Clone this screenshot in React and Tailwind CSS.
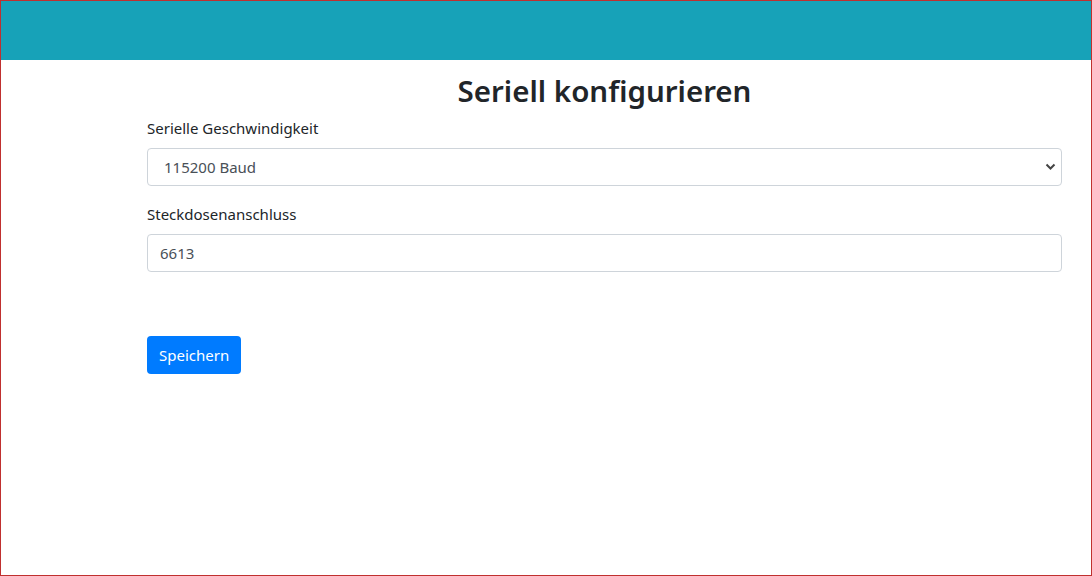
export default function App() {
  return (
    <div
      className="w-[1092px] h-[576px] border border-[#c0302f] bg-white flex flex-col overflow-hidden"
      style={{ fontFamily: '"Noto Sans", "Open Sans", sans-serif' }}
    >
      <div className="h-[59px] bg-[#17a2b8] shrink-0" />
      <div className="pl-[146px] pr-[29px] pt-[12px] flex flex-col">
        <h2 className="text-[29.5px] leading-[38px] font-semibold text-[#212529] text-center mb-[6px]">
          Seriell konfigurieren
        </h2>
        <label className="text-[15px] leading-[24px] text-[#212529] mb-[8px]">
          Serielle Geschwindigkeit
        </label>
        <div className="relative mb-[16px]">
          <select
            defaultValue="115200"
            className="w-full h-[38px] appearance-none border border-[#ced4da] rounded-[4px] pl-[16px] pr-[32px] text-[15px] text-[#495057] bg-white outline-none"
            style={{ fontFamily: 'inherit' }}
          >
            <option value="115200">115200 Baud</option>
          </select>
          <svg
            className="absolute right-[6px] top-[15px] pointer-events-none"
            width="11"
            height="8"
            viewBox="0 0 11 8"
          >
            <path d="M1.5 1.5 L5.5 5.5 L9.5 1.5" fill="none" stroke="#444" strokeWidth="2" />
          </svg>
        </div>
        <label className="text-[15px] leading-[24px] text-[#212529] mb-[8px]">
          Steckdosenanschluss
        </label>
        <input
          defaultValue="6613"
          className="w-full h-[38px] border border-[#ced4da] rounded-[4px] px-[12px] text-[15px] text-[#495057] bg-white outline-none"
          style={{ fontFamily: 'inherit' }}
        />
        <div className="mt-[64px]">
          <button className="h-[38px] px-[12px] rounded-[4px] bg-[#007bff] text-white text-[15px] leading-[24px]">
            Speichern
          </button>
        </div>
      </div>
    </div>
  );
}
